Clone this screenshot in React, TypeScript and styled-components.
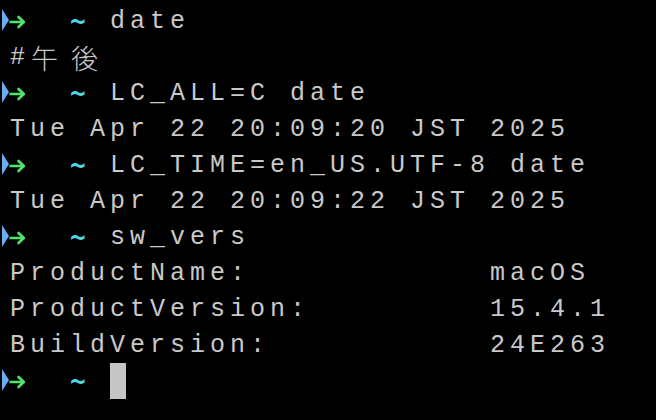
import React from "react";
import styled, { createGlobalStyle } from "styled-components";

const Global = createGlobalStyle`
  html, body { margin: 0; padding: 0; background: #000; }
  body { width: 656px; height: 420px; overflow: hidden; }
`;

const Screen = styled.div`
  box-sizing: border-box;
  width: 656px;
  height: 420px;
  background: #000;
  padding: 3px 0 0 10px;
  font-family: "Liberation Mono", "Noto Sans CJK JP", monospace;
  font-size: 25px;
  color: #c9c9c9;
`;

const Line = styled.div`
  display: flex;
  align-items: center;
  height: 36px;
  line-height: 36px;
  white-space: pre;
`;

const Cell = styled.span<{ $wide?: boolean }>`
  display: inline-block;
  width: ${(p) => (p.$wide ? 40 : 20)}px;
  flex: none;
  position: relative;
  top: 1px;
  font-family: ${(p) =>
    p.$wide ? `"Noto Sans CJK JP", sans-serif` : "inherit"};
  font-size: ${(p) => (p.$wide ? 27 : 25)}px;
  font-weight: ${(p) => (p.$wide ? 300 : 400)};
  padding-left: ${(p) => (p.$wide ? 1 : 0)}px;
  box-sizing: border-box;
`;

const Tilde = styled.span`
  display: inline-block;
  width: 20px;
  flex: none;
  color: #4fd8e8;
  font-family: "DejaVu Sans Mono", monospace;
  font-weight: bold;
  font-size: 26px;
  padding-left: 0;
  box-sizing: border-box;
`;

const Marker = styled.svg`
  flex: none;
  width: 30px;
  height: 36px;
  margin-left: -10px;
  display: block;
`;

const Cursor = styled.span`
  display: inline-block;
  width: 16px;
  height: 36px;
  background: #c6c6c6;
`;

const isWide = (ch: string) => /[\u3000-\u9fff\uff00-\uffef]/.test(ch);

const Cells: React.FC<{ text: string }> = ({ text }) => (
  <>
    {Array.from(text).map((ch, i) => (
      <Cell key={i} $wide={isWide(ch)}>
        {ch}
      </Cell>
    ))}
  </>
);

const PromptMark = () => (
  <Marker viewBox="0 0 30 36">
    <polygon points="2,6 9,17 2,28" fill="#69adf2" />
    <path
      d="M10.5 19 H23.5 M18.5 14 L23.8 19 L18.5 24"
      stroke="#4fe36a"
      strokeWidth="2.6"
      fill="none"
      strokeLinecap="round"
      strokeLinejoin="round"
    />
  </Marker>
);

const Prompt: React.FC<{ cmd?: string; cursor?: boolean }> = ({ cmd, cursor }) => (
  <Line>
    <PromptMark />
    <Cells text="  " />
    <Tilde>~</Tilde>
    <Cells text=" " />
    {cmd && <Cells text={cmd} />}
    {cursor && <Cursor />}
  </Line>
);

const Output: React.FC<{ text: string }> = ({ text }) => (
  <Line>
    <Cells text={text} />
  </Line>
);

export default function App() {
  return (
    <>
      <Global />
      <Screen>
        <Prompt cmd="date" />
        <Output text="#午後" />
        <Prompt cmd="LC_ALL=C date" />
        <Output text="Tue Apr 22 20:09:20 JST 2025" />
        <Prompt cmd="LC_TIME=en_US.UTF-8 date" />
        <Output text="Tue Apr 22 20:09:22 JST 2025" />
        <Prompt cmd="sw_vers" />
        <Output text="ProductName:            macOS" />
        <Output text="ProductVersion:         15.4.1" />
        <Output text="BuildVersion:           24E263" />
        <Prompt cursor />
      </Screen>
    </>
  );
}
